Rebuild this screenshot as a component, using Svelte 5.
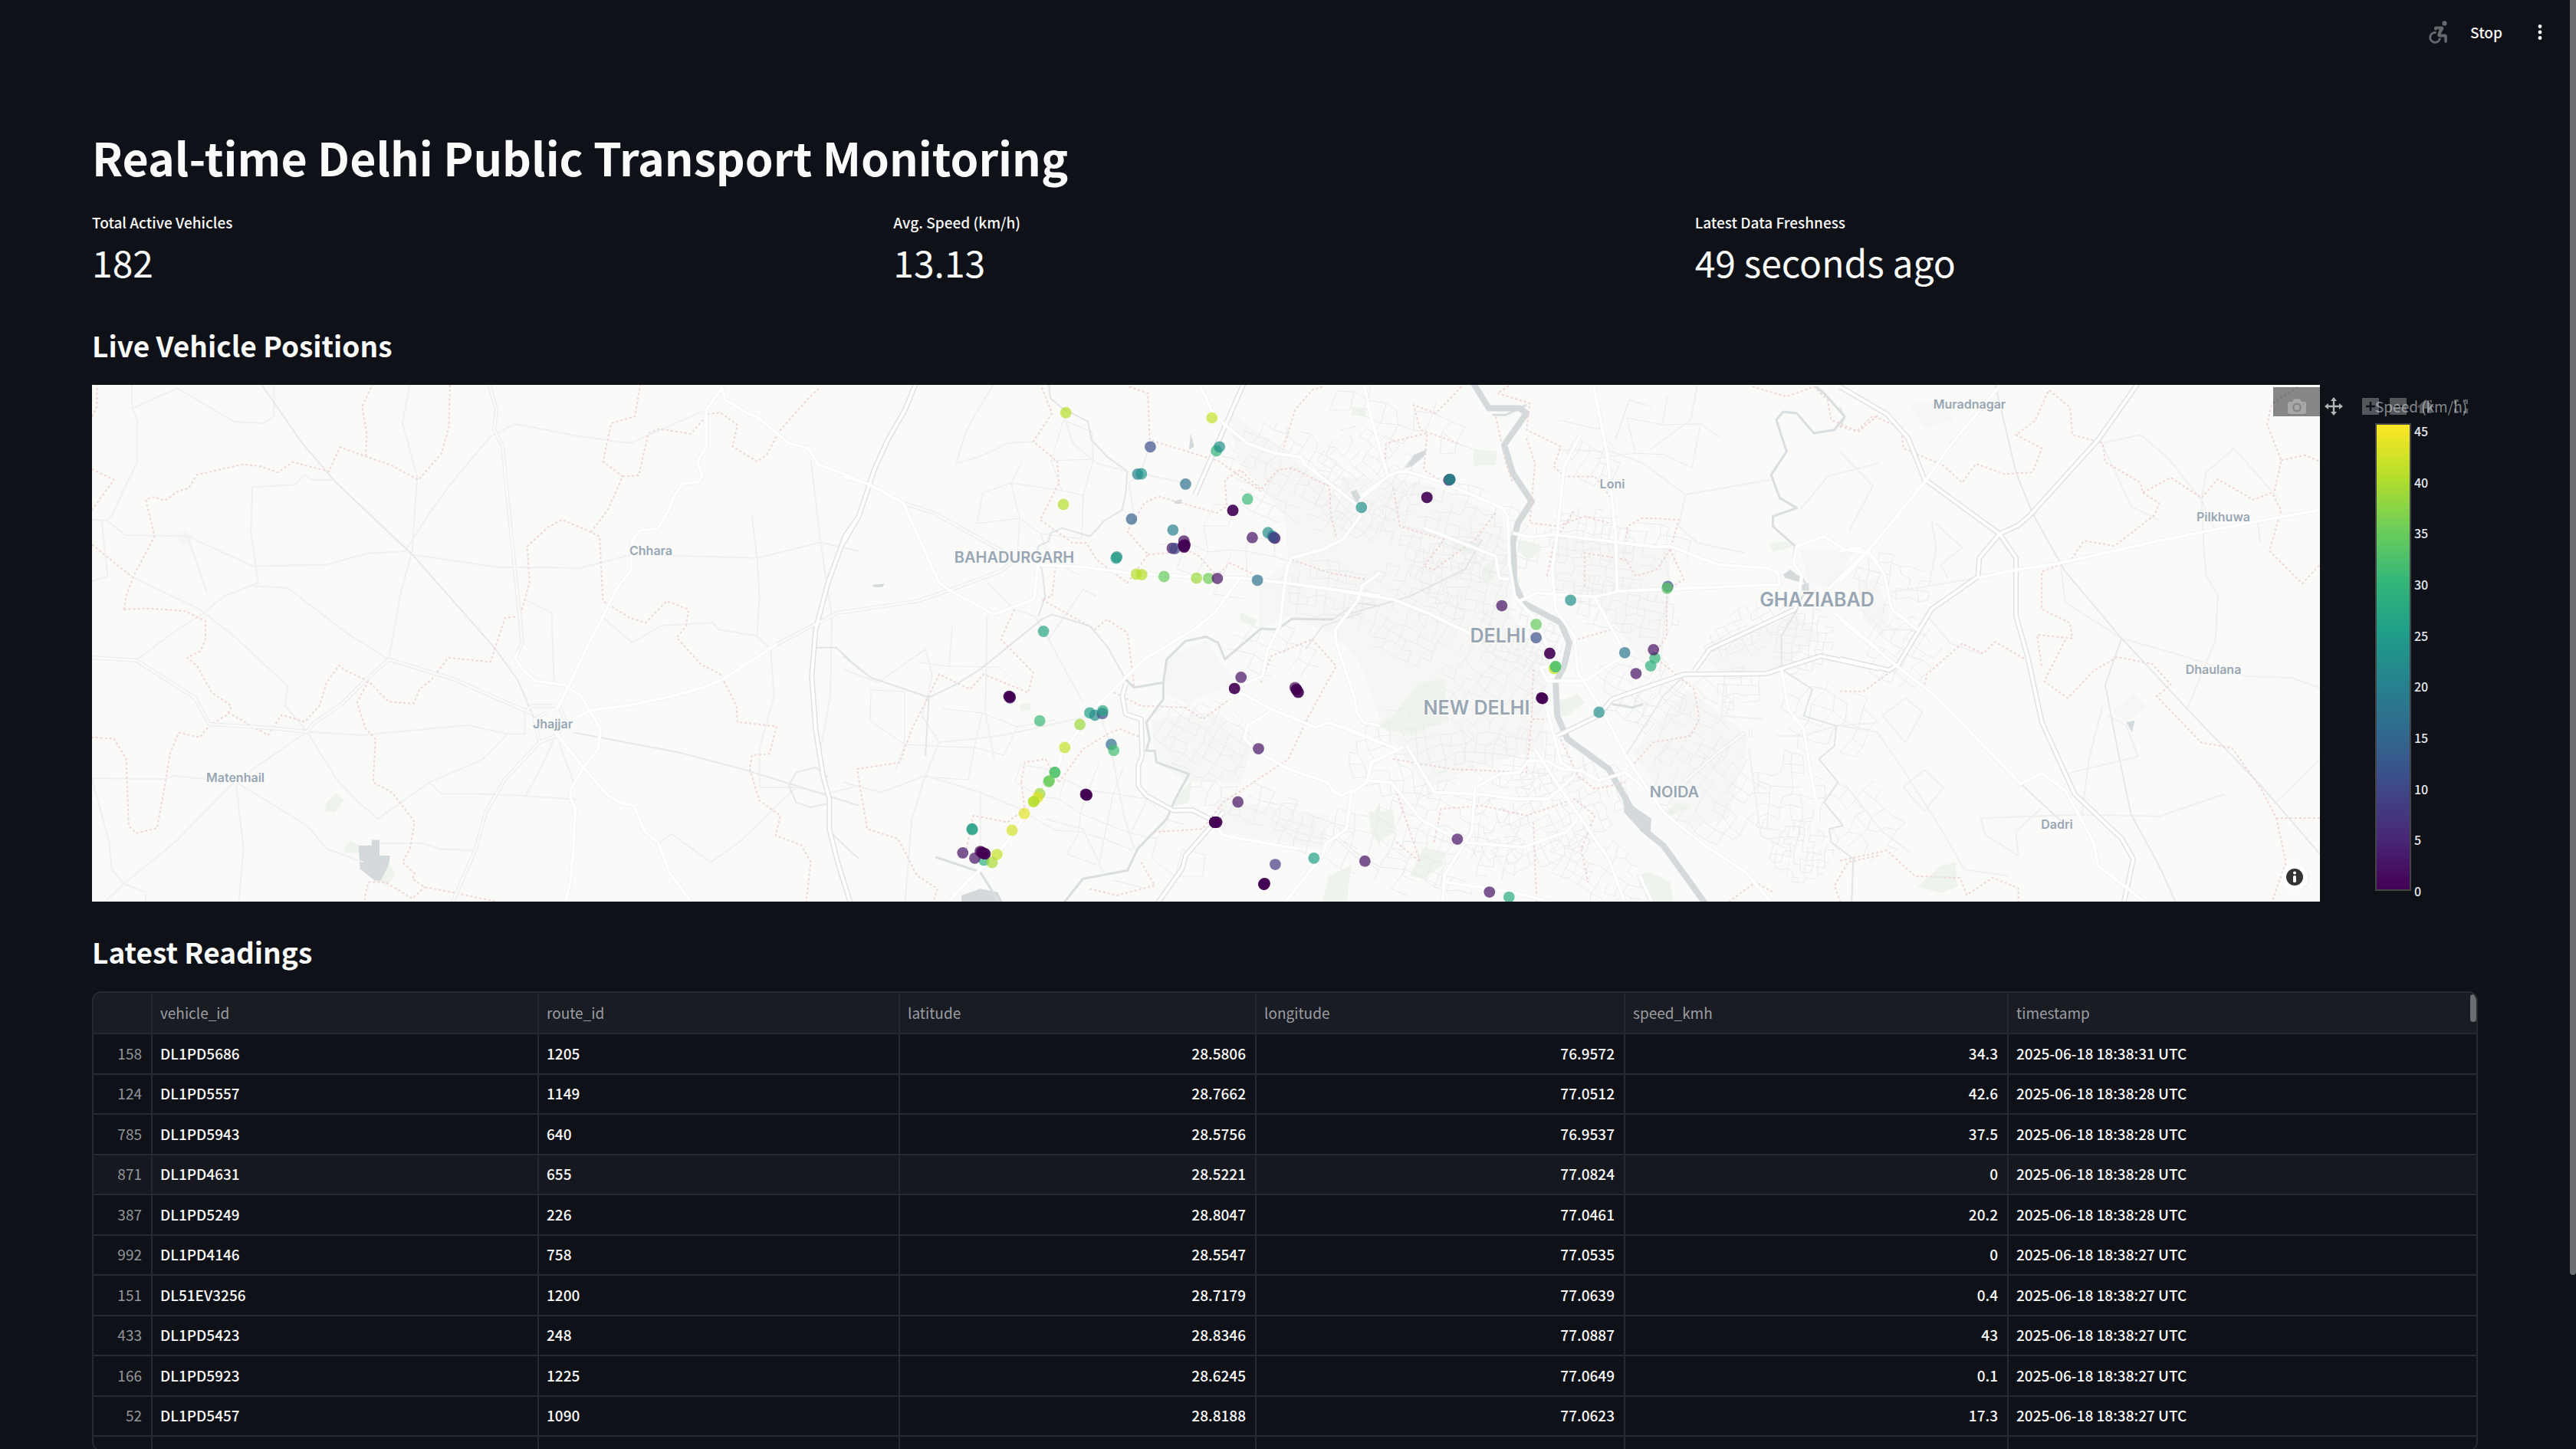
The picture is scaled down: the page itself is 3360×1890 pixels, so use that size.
<script>
  const metrics = [
    { label: 'Total Active Vehicles', value: '182' },
    { label: 'Avg. Speed (km/h)', value: '13.13' },
    { label: 'Latest Data Freshness', value: '49 seconds ago' }
  ];

  const columns = [
    { key: 'index', label: '' },
    { key: 'vehicle', label: 'vehicle_id' },
    { key: 'route', label: 'route_id' },
    { key: 'lat', label: 'latitude' },
    { key: 'lon', label: 'longitude' },
    { key: 'speed', label: 'speed_kmh' },
    { key: 'time', label: 'timestamp' }
  ];

  const readings = [
    ['158', 'DL1PD5686', '1205', '28.5806', '76.9572', '34.3', '2025-06-18 18:38:31 UTC'],
    ['124', 'DL1PD5557', '1149', '28.7662', '77.0512', '42.6', '2025-06-18 18:38:28 UTC'],
    ['785', 'DL1PD5943', '640', '28.5756', '76.9537', '37.5', '2025-06-18 18:38:28 UTC'],
    ['871', 'DL1PD4631', '655', '28.5221', '77.0824', '0', '2025-06-18 18:38:28 UTC'],
    ['387', 'DL1PD5249', '226', '28.8047', '77.0461', '20.2', '2025-06-18 18:38:28 UTC'],
    ['992', 'DL1PD4146', '758', '28.5547', '77.0535', '0', '2025-06-18 18:38:27 UTC'],
    ['151', 'DL51EV3256', '1200', '28.7179', '77.0639', '0.4', '2025-06-18 18:38:27 UTC'],
    ['433', 'DL1PD5423', '248', '28.8346', '77.0887', '43', '2025-06-18 18:38:27 UTC'],
    ['166', 'DL1PD5923', '1225', '28.6245', '77.0649', '0.1', '2025-06-18 18:38:27 UTC'],
    ['52', 'DL1PD5457', '1090', '28.8188', '77.0623', '17.3', '2025-06-18 18:38:27 UTC']
  ];

  const ticks = [45, 40, 35, 30, 25, 20, 15, 10, 5, 0];

  // Map sheets: each has its own grid, placed on the common 2906 x 674 canvas.
  const sheets = {
    west: { x: 0, y: -2, sx: 0.6378, sy: 0.4337 },
    mid: { x: 980, y: -2, sx: 0.4464, sy: 0.4337 },
    east: { x: 1630, y: -2, sx: 0.4464, sy: 0.4337 },
    far: { x: 2280, y: -2, sx: 0.6122, sy: 0.4464 }
  };

  function place(sheet, x, y) {
    const s = sheets[sheet];
    return [Math.round((s.x + x * s.sx) * 10) / 10, Math.round((s.y + y * s.sy) * 10) / 10];
  }

  function trace([sheet, points]) {
    return 'M' + points.split(' ').map((p) => place(sheet, ...p.split(',').map(Number)).join(' ')).join('L');
  }

  const highways = [
    ['west', '1568,400 1540,460 1505,600 1480,740 1472,880 1480,1040 1495,1180 1508,1250 1508,1340 1525,1440 1552,1568'],
    ['mid', '212,0 180,80 130,170 90,260 68,330 45,400 0,480'],
    ['mid', '1170,0 1115,130 1028,335'],
    ['mid', '825,905 815,940 825,995 870,1010 873,1120 862,1150 862,1210 885,1240 965,1285 1020,1283 1070,1310'],
    ['mid', '1110,1290 1000,1420 990,1460 915,1568'],
    ['east', '630,1060 750,1000 790,950 1000,875 1240,873 1400,820 1568,858'],
    ['east', '1030,865 1075,800 1325,680'],
    ['far', '0,10 100,90 145,160 180,280 340,440 375,510 375,680 400,800 430,990 500,1200 600,1330 625,1390 605,1516'],
    ['far', '635,0 550,165 405,385 380,415 340,440 297,510 294,565 195,660 125,820 105,838 0,805']
  ].map(trace);

  const majors = [
    ['west', '1290,10 1256,80 1256,190 1238,235 1248,280 1240,297 1208,302 1190,340 1180,380 1157,438 1120,442 1103,480 1103,560 1072,620 1045,700 1010,800 975,910 950,980'],
    ['west', '1285,0 1295,50 1340,90 1360,100 1425,180 1465,195 1485,245 1520,262 1568,292'],
    ['west', '870,810 865,825 880,860 908,895 968,908 1000,940 1020,990 1040,1040 1035,1100 1005,1155 980,1220 978,1245 988,1280 985,1400 978,1500 967,1568'],
    ['west', '1400,785 1290,890 1250,915 1180,943 1100,968 1018,984 985,1010'],
    ['west', '948,1050 1005,1155 1055,1240 1085,1265 1108,1270 1130,1348 1158,1383 1180,1470 1230,1568'],
    ['mid', '0,280 75,303 175,360 280,600 310,622 440,695 558,648 568,545 700,552 830,570 1070,585 1160,585 1290,600 1568,640'],
    ['mid', '1040,0 1075,80 1115,125 1180,180 1260,210 1337,222 1345,240 1500,365 1510,400 1460,470 1400,500 1310,525 1298,550 1290,600 1275,730 1240,800 1225,880 1160,910'],
    ['mid', '1568,300 1515,345 1505,370'],
    ['mid', '1160,585 1085,690 1025,740 880,830 820,890 740,970 640,1110 618,1180 540,1290 450,1417 360,1500 300,1568'],
    ['mid', '1143,920 1250,980 1380,1035 1420,1020 1568,1080'],
    ['mid', '1285,1568 1400,1420 1410,1385 1470,1340 1485,1230 1530,1200 1545,1140 1568,1130'],
    ['mid', '1250,985 1180,1030 1172,1070 1230,1120 1300,1160 1415,1200 1430,1225 1455,1240 1485,1225'],
    ['mid', '1568,570 1515,610 1505,650 1437,740 1440,780 1495,950 1500,990 1520,1020 1568,1030'],
    ['mid', '1070,1310 1110,1360 1330,1400'],
    ['east', '65,0 85,100 135,280 55,340'],
    ['east', '135,280 160,268 190,265 300,300 470,375 485,400 490,540 505,640 570,715 600,790 615,850'],
    ['east', '500,450 545,462 620,455 920,492 960,490 1100,545 1240,555 1275,570 1280,605 810,625 740,642 620,635 570,630 520,655'],
    ['east', '735,0 775,210 800,450 805,625'],
    ['east', '700,150 650,250 630,450 615,560 625,680 680,760 690,870 760,980 830,1120 940,1290 1060,1390 1180,1470 1260,1568'],
    ['east', '1325,680 1345,580 1320,540 1330,490 1410,460 1470,500 1540,510 1568,540'],
    ['east', '740,645 830,815 710,895 600,895 582,855 615,850'],
    ['east', '0,625 150,650 250,690 380,755'],
    ['east', '240,435 450,520 460,585 490,590'],
    ['east', '0,1030 160,1100'],
    ['east', '190,1090 270,1230 420,1237 500,1250 605,1250 680,1180'],
    ['east', '75,1195 145,1200 230,1310 350,1380 530,1395 655,1350 690,1310'],
    ['east', '75,1195 85,1140 180,1095'],
    ['east', '565,1100 640,1220 780,1430 830,1568'],
    ['east', '390,1215 380,1350 300,1480 295,1568'],
    ['east', '300,1500 500,1530 640,1568'],
    ['east', '395,1215 460,1175 520,1170 545,1135 600,1135 640,1160 700,1165 750,1195 830,1170 880,1215'],
    ['east', '600,980 640,1140 670,1160'],
    ['east', '1285,860 1305,980 1350,1040 1370,1170 1385,1250'],
    ['east', '1568,470 1420,620'],
    ['east', '1440,690 1568,800'],
    ['east', '870,1480 910,1568'],
    ['far', '345,0 230,190 185,280 60,490 0,580'],
    ['far', '0,490 40,480 70,510 95,560 110,660 165,720'],
    ['far', '1022,370 900,400 680,460 470,525 375,545 295,568'],
    ['far', '0,690 120,825 200,910 385,1170 430,1140 480,1190 540,1340 550,1410 650,1516']
  ].map(trace);

  const secondaries = [
    ['west', '812,0 827,80 822,140 840,190 850,350 862,520 874,690 880,780 870,810'],
    ['west', '1568,682 1525,690 1485,720 1400,785'],
    ['west', '0,825 90,833 210,945 240,1025 370,1037 440,1048 455,1020 510,965 565,885 607,830 740,890 840,955 900,993'],
    ['west', '915,1080 845,1190 805,1290 785,1400 735,1568'],
    ['west', '885,988 900,970 955,970 970,1020 950,1060 915,1080 905,1010 930,990'],
    ['mid', '175,360 265,390 470,508 485,545 460,565 310,622 215,655 0,688'],
    ['east', '1000,1200 1100,1110 1180,1050'],
    ['east', '1195,1065 1195,1035'],
    ['mid', '1440,1365 1500,1420 1568,1460']
  ].map(trace);

  const minors = [
    ['west', '82,0 82,75 92,110 92,240 65,320 40,400 20,420 32,580 0,595'],
    ['west', '82,75 175,15 290,115 350,120 372,100 372,0'],
    ['west', '0,410 30,412 68,456 195,460 330,550 480,545 560,512 640,505 690,390 740,290 815,160 865,122 1000,160 1100,180 1256,80'],
    ['west', '497,290 450,290 435,275 415,305 328,312 325,450 340,600 270,640 220,700 175,740 90,833'],
    ['west', '195,460 235,630'],
    ['west', '80,580 220,680 290,760 400,910 395,970 440,1048'],
    ['west', '650,0 635,120 665,280 655,500 630,640 607,830'],
    ['west', '330,610 400,615 520,750 607,830'],
    ['west', '655,515 830,553 1000,555 1103,515 1360,525 1490,478 1568,505'],
    ['west', '1350,400 1360,525 1365,640 1360,760 1280,740 1270,720 1165,728 1105,780 1045,705'],
    ['west', '1360,760 1388,800 1395,940 1365,1100 1365,1215 1440,1215'],
    ['west', '1470,230 1490,480 1513,700 1510,940 1490,1100'],
    ['west', '885,650 940,690 945,900'],
    ['west', '440,1048 290,1200 170,1180 150,1190 0,1188'],
    ['west', '290,1200 170,1380 65,1505 20,1568'],
    ['west', '295,1210 310,1400 300,1568'],
    ['west', '295,1200 440,1330 480,1400 555,1440'],
    ['west', '0,1188 35,1380 40,1460 65,1505 110,1530 110,1568'],
    ['west', '440,1048 500,1190 545,1260 585,1310 690,1200 800,1130 850,1055'],
    ['west', '440,1048 550,1058 770,1028 850,1055 885,1055 885,990'],
    ['west', '690,1200 715,1235 800,1235 880,1240 990,1252'],
    ['west', '590,1383 675,1383 710,1400 780,1405'],
    ['west', '1160,1383 1185,1355 1265,1440 1320,1385 1440,1215'],
    ['west', '1440,1215 1500,1235 1568,1210'],
    ['west', '945,1070 920,1150 885,1245'],
    ['west', '955,1080 985,1200'],
    ['mid', '440,0 360,140 330,240 400,220 480,180 560,175'],
    ['mid', '640,80 670,180 740,240 830,265'],
    ['mid', '890,200 870,270 835,300 850,400'],
    ['mid', '870,272 1000,300'],
    ['mid', '420,600 500,680 560,700 600,770 700,960'],
    ['mid', '0,860 100,900 240,800 260,880 230,1000 280,1080 460,1060 720,1000'],
    ['mid', '740,960 780,1090 820,1300 850,1400'],
    ['mid', '280,1080 240,1180 200,1310 180,1568'],
    ['mid', '0,1200 110,1230 240,1180 400,1230 540,1290'],
    ['mid', '400,1230 400,1400'],
    ['mid', '420,700 415,990 440,1130'],
    ['mid', '600,770 700,620 740,640'],
    ['mid', '590,1310 700,1340 760,1470'],
    ['east', '640,200 790,205 880,240 1005,335 985,430 1040,480 1180,510'],
    ['east', '1005,335 1250,290'],
    ['east', '1040,0 1020,110 900,200'],
    ['east', '905,70 840,50 800,170'],
    ['east', '1568,240 1420,280 1340,380'],
    ['east', '940,500 960,600 940,740 930,880'],
    ['east', '1120,870 1110,1000 1230,1010'],
    ['east', '1445,1030 1568,1020'],
    ['east', '1270,1060 1350,1060 1445,1030'],
    ['east', '1190,1100 1225,1360 1300,1400'],
    ['far', '195,400 205,480 190,590'],
    ['far', '205,410 260,480 215,530 230,570'],
    ['far', '110,610 295,568'],
    ['far', '40,560 45,660 90,720 165,720'],
    ['far', '555,170 580,240 620,360 680,400'],
    ['far', '560,175 640,150 700,220 770,340 800,430'],
    ['far', '770,340 775,480 780,560 805,620 800,750 740,950'],
    ['far', '840,190 780,260 770,340'],
    ['far', '840,190 930,330'],
    ['far', '470,530 480,640 600,745 740,800 860,855 960,860 1022,890'],
    ['far', '485,1140 635,1090 610,1000 570,970'],
    ['far', '560,940 530,1100 515,1260 680,1265 820,1200'],
    ['far', '300,1270 520,1260'],
    ['far', '300,1270 310,1320 380,1380'],
    ['far', '925,1230 1022,1100'],
    ['far', '0,1000 80,1020 135,1130 210,1290 265,1420 360,1440'],
    ['far', '10,1170 90,1310 150,1370'],
    ['far', '90,970 140,920 175,960 140,1050 90,970'],
    ['far', '180,1130 135,1180 180,1250 220,1180 180,1130'],
    ['far', '380,1380 375,1310 430,1240'],
    ['far', '890,400 895,465'],
    ['far', '180,670 235,760 300,790'],
    ['far', '0,200 70,300 20,430']
  ].map(trace);

  const rails = [
    ['west', '345,0 430,180 500,300 655,515 820,790 870,890 905,1010'],
    ['west', '985,1050 1200,1110 1330,1160 1440,1210 1568,1270'],
    ['west', '1425,1210 1440,1170 1480,1155 1505,1185'],
    ['west', '1425,1210 1440,1260 1470,1275 1510,1262'],
    ['west', '1510,1350 1568,1430'],
    ['mid', '1515,690 1400,730 1350,800'],
    ['east', '830,1120 940,940 1000,880'],
    ['far', '330,0 375,260 410,380 480,550 600,745 735,945 900,1180 1022,1375'],
    ['far', '600,745 565,880 590,1060 620,1260 680,1410 715,1516'],
    ['far', '385,1170 480,1290']
  ].map(trace);

  const borders = [
    ['west', '0,258 45,290 20,340 0,380'],
    ['west', '10,0 10,70 0,100'],
    ['west', '0,485 80,580'],
    ['west', '65,680 70,640 85,580 128,460 110,350 125,342 150,352 175,325 198,315 215,275 310,243 345,250 380,268 410,237 485,265 507,192 560,220 610,245 668,290 715,210 730,130 732,0'],
    ['west', '575,0 552,70 562,150 560,220'],
    ['west', '65,680 120,677 190,685 232,715 232,770 222,805 195,825 215,850 245,930 285,970 278,995 240,1030 220,1065 178,1050 160,1110 150,1200 133,1338 90,1353 75,1330 70,1130 45,1068 0,1065'],
    ['west', '278,990 360,1058 388,997 435,1018 465,970 480,900 505,848 520,865 565,895 607,958 658,963 670,920 695,890 728,825 815,838 845,705 875,700 895,600 890,490 935,430 962,410 1020,448 1038,460 1045,655 1100,705 1132,720 1175,655 1220,680 1215,730 1196,765 1245,845 1285,875 1318,970 1320,1018 1400,1032 1385,1115 1350,1118 1345,1160 1365,1255 1408,1300 1398,1360 1450,1388 1470,1440 1460,1568'],
    ['west', '1020,448 1055,380 1085,280 1045,235 1062,120 1110,100 1122,0'],
    ['west', '1085,280 1118,277 1138,150 1160,137 1225,152 1260,92 1285,88 1320,125 1310,190 1360,235 1380,215 1405,145 1465,45 1490,10'],
    ['west', '565,895 542,960 560,1040 580,1070 575,1200 615,1232 660,1320 650,1400 635,1440 660,1475 655,1490 680,1515 735,1530 830,1560'],
    ['west', '555,1568 565,1500 600,1500 655,1550 680,1515'],
    ['mid', '575,0 610,90 555,175 625,235 630,300 575,410 670,480 710,480 740,530 830,600 890,515 830,445 880,360 920,340 1090,390 1120,370 1115,290 1160,260 1220,320 1270,260 1310,255 1420,310 1425,400 1440,460'],
    ['mid', '890,515 1010,505 1040,520 1090,580 1130,540 1200,575'],
    ['mid', '835,10 890,30 895,170 1100,235 1220,325'],
    ['mid', '1400,10 1370,20 1320,80 1285,200'],
    ['mid', '500,680 460,770 555,870 540,930 410,875 370,920 280,875 240,960 200,1040 165,1140 40,1160 70,1340 160,1370 215,1480 275,1520 260,1568'],
    ['mid', '620,550 610,640 580,650 735,740 770,710 830,750 850,910'],
    ['mid', '630,1200 700,1100 780,1050 810,1040 880,1070'],
    ['mid', '520,1200 530,1140 590,1130 630,1200'],
    ['mid', '520,1200 530,1280 480,1320 380,1300 360,1400'],
    ['mid', '790,930 870,970 1000,975 1050,1010 1130,950'],
    ['mid', '1370,770 1440,850 1360,1000 1300,1130 1110,1260 1050,1340 900,1350'],
    ['mid', '1310,530 1420,570 1530,590'],
    ['mid', '720,1520 800,1540 910,1510 870,1440'],
    ['mid', '1220,900 1250,820 1370,770'],
    ['east', '350,10 275,90 210,65 230,140 340,180'],
    ['east', '125,270 130,180 250,150 240,260 300,300'],
    ['east', '450,100 480,240 500,300'],
    ['east', '500,0 455,30 550,60 540,140 640,190 620,250 650,280 740,280 790,350'],
    ['east', '540,165 565,240 550,420 630,430 710,400 780,420'],
    ['east', '830,480 835,430 880,405 985,410 960,500 1000,590 950,620 950,760 910,820 1030,920 1045,1010 1020,1060 910,1080 840,1160'],
    ['east', '710,610 710,510 830,530 860,580 920,560 960,500'],
    ['east', '450,390 390,470 270,560 240,550 300,470 170,430 150,310'],
    ['east', '690,770 790,740'],
    ['east', '600,580 620,480 680,380'],
    ['east', '560,860 555,1010 600,1010'],
    ['east', '150,1130 320,1160 540,1170 555,1010'],
    ['east', '160,1380 230,1440 150,1200'],
    ['east', '270,1380 290,1280 410,1270 540,1300 680,1250 740,1300 700,1400 720,1500'],
    ['east', '640,1070 690,1180 740,1220 830,1200'],
    ['east', '1200,10 1300,40 1380,10 1420,50 1430,110 1510,145 1568,95'],
    ['east', '1120,1568 1210,1500 1260,1530'],
    ['east', '560,1320 570,1568'],
    ['east', '1568,1420 1480,1440 1440,1510 1460,1568'],
    ['far', '0,125 35,140 70,95 130,130 135,190 220,240 260,290 290,235 350,265 410,260 430,190 375,150 415,110 445,20 490,70 495,150 560,175 565,230 640,290 645,320 705,275 770,335 805,280 880,340 920,320 940,370 915,490 985,585 1022,530'],
    ['far', '645,320 680,350 670,385 585,475 520,460 490,520 430,550 430,660 490,700 495,745 420,735 430,830'],
    ['far', '480,750 435,870 485,920 540,840 590,800 665,820 705,880 675,915 770,1050 835,1065 895,1180 930,1270 1022,1270'],
    ['far', '930,1270 950,1400 920,1516'],
    ['far', '975,10 920,60 910,120 940,225 925,320'],
    ['far', '940,225 990,210 1022,228'],
    ['far', '180,880 185,850 260,760 305,790 330,755 400,810'],
    ['far', '0,1395 100,1365 160,1440 255,1445 270,1495 325,1445 380,1475 380,1516'],
    ['far', '0,900 50,900 120,830']
  ].map(trace);

  const rivers = [
    ['east', '385,0 430,75 520,75 540,90 475,185 500,270 555,355 515,420 500,480 505,600 530,660 640,720 665,780 650,850 625,900 630,1000 660,1070 780,1160 830,1250 880,1340 940,1390 1065,1568']
  ].map(trace);

  const streams = [
    ['mid', '935,900 945,830 1000,775 1060,762 1095,780 1115,830 1220,738 1270,740 1310,708 1430,710'],
    ['mid', '820,885 850,915 935,900 935,950 885,1020 895,1070 885,1105 910,1105 915,1140 1010,1175 970,1250 945,1310 860,1400 830,1465 700,1490 640,1568'],
    ['mid', '270,1425 400,1470 460,1568'],
    ['east', '1385,10 1410,30 1470,100 1440,140 1380,150 1330,90 1290,85 1270,110 1300,205 1255,275 1280,345 1330,375 1260,400 1260,430 1325,490 1320,540 1360,610 1325,690'],
    ['east', '790,965 850,975 880,965'],
    ['east', '440,95 480,95 540,65']
  ].map(trace);

  const brooks = [
    ['mid', '1430,710 1500,660 1568,670'],
    ['mid', '600,0 605,45 640,75 715,115 725,170 770,220 830,265 825,330 815,380 760,415 740,440 720,460 640,435 605,450 600,475 570,490 565,510 580,560 590,640 570,700'],
    ['mid', '0,820 80,885 180,920 250,945 330,905 400,860 580,710 610,695 720,730 770,790 820,880'],
    ['mid', '250,945 240,1120'],
    ['east', '1325,690 1285,760 1285,860 1375,920 1350,1000 1445,1030 1440,1090 1395,1130 1450,1200 1410,1260 1465,1330 1425,1340 1430,1380 1495,1430 1490,1568'],
    ['east', '0,700 200,640 360,560 410,470'],
    ['west', '1482,795 1522,795 1568,858'],
    ['far', '0,70 10,100 0,130']
  ].map(trace);

  const lakes = [
    ['west', '545,1390 572,1390 572,1373 588,1373 588,1420 610,1420 605,1455 590,1495 578,1495 548,1460'],
    ['mid', '345,1540 400,1520 450,1530 470,1568 345,1568'],
    ['mid', '1482,325 1500,320 1515,350 1500,365'],
    ['mid', '1015,150 1025,190 1010,200'],
    ['mid', '965,355 990,348 985,362 970,362'],
    ['mid', '85,605 120,603 115,612 90,613'],
    ['east', '185,255 210,215 250,198 240,220 205,250'],
    ['east', '820,1220 850,1270 905,1310 900,1370 860,1330 825,1290'],
    ['east', '1345,605 1365,600 1365,625 1345,625'],
    ['east', '1290,575 1310,560 1350,590 1345,600 1295,585'],
    ['far', '610,990 628,985 622,1020']
  ].map((l) => trace(l) + 'Z');

  const parks = [
    ['west', '480,1260 500,1232 515,1255 497,1290 475,1285'],
    ['west', '515,1395 530,1375 545,1390 545,1412 515,1412'],
    ['west', '585,1495 605,1430 620,1475 605,1510'],
    ['mid', '515,965 550,960 545,985 520,985'],
    ['mid', '1160,690 1210,710 1200,730 1160,715'],
    ['mid', '1400,1560 1420,1480 1485,1450 1470,1568'],
    ['mid', '1545,1300 1568,1260 1568,1390 1540,1350'],
    ['mid', '960,1260 1020,1190 1010,1260 970,1270'],
    ['mid', '1485,70 1530,75 1525,100 1485,95'],
    ['east', '385,197 455,205 450,245 385,248'],
    ['east', '515,470 580,485 570,515 545,530 515,505'],
    ['east', '225,900 300,890 310,1010 200,1060 100,1030 150,1000'],
    ['east', '80,1290 150,1285 155,1350 115,1375 85,1345'],
    ['east', '200,1480 240,1395 300,1410 295,1450 235,1490'],
    ['east', '620,960 690,935 710,960 660,1000 630,1000'],
    ['east', '1250,480 1300,475 1320,490 1260,508'],
    ['east', '860,1480 900,1470 960,1500 970,1568 900,1568'],
    ['east', '940,1290 990,1260 1020,1275 960,1300'],
    ['east', '320,470 400,480 380,510 330,500'],
    ['east', '410,560 440,530 445,590 415,600'],
    ['far', '165,1470 215,1410 245,1400 250,1470 215,1490']
  ].map((p) => trace(p) + 'Z');

  const built = [
    ['mid', '1130,90 1290,200 1440,340 1568,500 1568,900 1440,760 1300,700 1215,740 1215,600 1300,540 1290,400 1150,230'],
    ['mid', '940,830 1060,770 1110,850 1150,900 1000,960 940,930'],
    ['mid', '900,1010 1080,990 1200,1080 1160,1200 1000,1200 910,1130'],
    ['mid', '1090,1250 1420,1300 1400,1400 1110,1350'],
    ['east', '0,280 250,300 470,400 490,590 500,700 600,860 590,1100 400,1150 250,1220 120,1030 0,700'],
    ['east', '620,460 960,500 950,760 880,840 740,640 620,630'],
    ['east', '1060,830 1330,690 1400,760 1280,860 1110,870'],
    ['east', '850,1110 1010,920 1190,1060 1130,1310 1010,1340'],
    ['east', '1340,500 1500,500 1430,620 1360,590'],
    ['west', '175,450 190,440 208,460 200,490 178,480'],
    ['far', '45,580 80,570 105,680 90,740 50,690'],
    ['far', '580,960 625,905 655,945 610,990'],
    ['far', '150,60 230,50 240,110 180,130']
  ].map((p) => trace(p) + 'Z');

  // Street patches: centre, half-size, grid step, rotation in degrees.
  const districts = [
    [1560, 120, 90, 60, 15, 28], [1660, 130, 70, 70, 12, 40], [1780, 190, 110, 60, 14, 15],
    [1610, 270, 60, 40, 12, 5], [1720, 300, 80, 60, 13, 25], [1450, 460, 70, 50, 14, 32],
    [1540, 560, 120, 30, 16, 20], [1720, 480, 80, 60, 15, -12], [1830, 400, 70, 70, 15, 35],
    [1860, 330, 60, 40, 9, 20], [1790, 250, 70, 50, 13, 10], [1950, 220, 60, 60, 11, 5],
    [2000, 290, 70, 40, 12, 12], [1770, 590, 100, 70, 15, 18], [1900, 560, 110, 60, 12, -25],
    [1870, 490, 80, 40, 13, 8], [1960, 630, 70, 40, 12, 30], [2020, 400, 60, 50, 15, 28],
    [2080, 440, 70, 60, 17, 35], [2110, 530, 80, 60, 16, 35], [2160, 320, 60, 30, 12, -27],
    [2150, 400, 30, 30, 11, 0], [2230, 330, 40, 50, 10, 8], [2210, 540, 50, 60, 14, 4],
    [2230, 610, 40, 40, 8, 8], [2270, 440, 70, 50, 20, 25], [2350, 260, 50, 40, 14, 10],
    [2360, 350, 50, 50, 15, 35], [2310, 570, 60, 50, 17, 40], [1540, 350, 60, 40, 18, 20],
    [1690, 40, 120, 36, 22, 15], [1480, 220, 90, 60, 30, 10], [1330, 570, 140, 70, 34, 20],
    [1250, 160, 90, 110, 46, 8], [1130, 430, 120, 110, 50, 12], [2010, 60, 130, 50, 42, 6],
    [1650, 610, 120, 50, 26, 22], [2030, 210, 60, 30, 14, 10], [1960, 100, 40, 30, 14, 30]
  ];

  function makeStreets() {
    let seed = 7321;
    const random = () => ((seed = (seed * 16807) % 2147483647) / 2147483647);
    return districts.map(([cx, cy, hw, hh, step, angle]) => {
      const a = (angle * Math.PI) / 180;
      const cols = Math.ceil((2 * hw) / step);
      const rows = Math.ceil((2 * hh) / step);
      const node = [];
      for (let r = 0; r <= rows; r++) {
        node.push([]);
        for (let c = 0; c <= cols; c++) {
          const x = -hw + c * step + (random() - 0.5) * step * 0.5;
          const y = -hh + r * step + (random() - 0.5) * step * 0.5;
          const inside = (x / hw) ** 2 + (y / hh) ** 2 < 1.15;
          const px = Math.round(cx + x * Math.cos(a) - y * Math.sin(a));
          const py = Math.round(cy + x * Math.sin(a) + y * Math.cos(a));
          node[r].push(inside ? `${px} ${py}` : null);
        }
      }
      let d = '';
      for (let r = 0; r <= rows; r++) {
        for (let c = 0; c <= cols; c++) {
          const here = node[r][c];
          const right = node[r][c + 1];
          const below = node[r + 1]?.[c];
          if (here && right && random() < 0.72) d += `M${here}L${right}`;
          if (here && below && random() < 0.72) d += `M${here}L${below}`;
        }
      }
      return d;
    });
  }
  const streets = makeStreets();

  const towns = [
    ['Chhara', 729, 216, 'town'], ['Jhajjar', 601, 442, 'town'], ['Matenhail', 187, 512, 'town'],
    ['Loni', 1983, 129, 'town'], ['Muradnagar', 2449, 25, 'town'], ['Pilkhuwa', 2780, 172, 'town'],
    ['Dhaulana', 2767, 371, 'town'], ['Dadri', 2563, 573, 'town'],
    ['BAHADURGARH', 1203, 225, 'city'], ['NOIDA', 2064, 531, 'city'],
    ['DELHI', 1834, 327, 'metro'], ['NEW DELHI', 1806, 421, 'metro'], ['GHAZIABAD', 2250, 280, 'metro']
  ];

  // Vehicle fixes: x, y, speed and how many vehicles share the spot.
  const fixes = {
    mid: [
      [650, 88, 41], [1077, 104, 42], [897, 191, 11], [1090, 203, 30], [1099, 191, 23], [860, 273, 20],
      [871, 272, 24], [1000, 303, 17], [643, 364, 41], [842, 408, 14], [963, 441, 20], [1181, 348, 31],
      [1138, 382, 0, 2], [1514, 373, 23], [1195, 464, 2], [1241, 449, 22], [1261, 466, 2], [1254, 460, 20],
      [1258, 464, 8], [961, 496, 2], [969, 497, 10], [995, 474, 1], [998, 486, 0, 2], [996, 492, 0, 2],
      [994, 488, 0, 2], [799, 522, 22], [797, 526, 26], [856, 574, 41], [872, 575, 41], [937, 581, 35],
      [1032, 586, 39], [1067, 587, 36], [1093, 587, 2], [1210, 592, 17], [585, 746, 27], [487, 946, 4],
      [484, 942, 0, 2], [487, 943, 0, 2], [574, 1015, 31], [720, 991, 26], [735, 998, 22], [757, 993, 10],
      [758, 985, 27], [691, 1026, 39], [647, 1095, 42], [783, 1086, 17], [790, 1104, 32], [618, 1170, 33, 2],
      [600, 1198, 36], [602, 1195, 35], [574, 1234, 39], [568, 1245, 44], [556, 1258, 41, 2], [529, 1294, 44],
      [493, 1344, 43], [708, 1236, 0, 2], [711, 1238, 0, 3], [376, 1340, 22], [377, 1342, 27], [349, 1412, 2],
      [400, 1408, 1], [411, 1434, 29], [384, 1428, 2], [404, 1410, 0], [408, 1413, 0, 3], [414, 1415, 0, 2],
      [449, 1417, 42], [435, 1441, 40], [1162, 884, 2], [1143, 918, 0, 2], [1320, 915, 1], [1324, 921, 0, 3],
      [1329, 929, 0, 2], [1213, 1099, 2], [1153, 1259, 2], [1085, 1320, 0, 3], [1091, 1320, 0, 2],
      [1375, 1428, 26], [1262, 1447, 8], [1524, 1437, 2], [1229, 1507, 0, 3], [1231, 1504, 0, 2]
    ],
    east: [
      [313, 291, 3], [316, 289, 22, 1], [316, 289, 4], [316, 289, 24], [249, 343, 0, 2], [468, 669, 2],
      [669, 652, 23], [568, 725, 35], [568, 765, 11], [608, 812, 0, 2], [621, 858, 42], [625, 852, 33, 2],
      [584, 946, 0, 2], [587, 948, 0, 2], [752, 989, 23], [827, 810, 18], [915, 826, 30], [911, 801, 2],
      [903, 850, 29], [860, 873, 2], [953, 611, 12], [951, 616, 34], [338, 1371, 2], [432, 1530, 2],
      [489, 1545, 28]
    ]
  };

  const viridis = ['440154', '482878', '3e4989', '31688e', '26828e', '1f9e89', '35b779', '6ece58', 'b5de2b', 'fde725'];

  function speedColor(speed) {
    const t = (speed / 46) * (viridis.length - 1);
    const i = Math.min(Math.floor(t), viridis.length - 2);
    const mix = [0, 2, 4].map((k) => {
      const from = parseInt(viridis[i].slice(k, k + 2), 16);
      const to = parseInt(viridis[i + 1].slice(k, k + 2), 16);
      return Math.round(from + (to - from) * (t - i));
    });
    return `rgb(${mix.join(',')})`;
  }

  const dots = Object.entries(fixes).flatMap(([sheet, list]) =>
    list.flatMap(([x, y, speed, count = 1]) => {
      const [cx, cy] = place(sheet, x, y);
      return Array.from({ length: count }, () => ({ cx, cy, fill: speedColor(speed) }));
    })
  );
</script>

<div class="app">
  <header class="toolbar">
    <svg class="running" viewBox="0 0 24 31" aria-label="Running" role="img">
      <circle cx="20.5" cy="3.4" r="3.1" />
      <path d="M7 11V9.5Q7 7.500 9 7.500H17.500Q20.500 8.500 18.800 11.500L15.500 17.500H21Q23.800 17.500 23.800 20V27.500Q22 30.500 20.300 27.500V21.500H14Q10.500 20.500 11.500 17.500L13.700 11.200H10.500L9.500 12.500Q7.500 13 7 11Z" />
      <path class="wheel" d="M8.500 15.500A6.400 6.400 0 1 0 14.200 24" />
    </svg>
    <button class="stop" type="button">Stop</button>
    <button class="menu" type="button" aria-label="Main menu">
      <svg viewBox="0 0 6 22">
        <circle cx="3" cy="3.500" r="2.400" />
        <circle cx="3" cy="11" r="2.400" />
        <circle cx="3" cy="18.500" r="2.400" />
      </svg>
    </button>
  </header>

  <main>
    <h1>Real-time Delhi Public Transport Monitoring</h1>

    <section class="metrics">
      {#each metrics as metric}
        <div class="metric">
          <div class="label">{metric.label}</div>
          <div class="value">{metric.value}</div>
        </div>
      {/each}
    </section>

    <h2>Live Vehicle Positions</h2>
    <section class="chart">
      <svg class="map" viewBox="0 0 2906 674" role="img" aria-label="Map of vehicle positions around Delhi">
        <rect class="land" width="2906" height="674" />
        {#each built as d}<path class="built" {d} />{/each}
        {#each parks as d}<path class="park" {d} />{/each}
        {#each lakes as d}<path class="lake" {d} />{/each}
        {#each streets as d}<path class="street" {d} />{/each}
        {#each minors as d}<path class="minor" {d} />{/each}
        {#each brooks as d}<path class="brook" {d} />{/each}
        {#each streams as d}<path class="stream" {d} />{/each}
        {#each rivers as d}<path class="river" {d} />{/each}
        {#each rails as d}<path class="rail" {d} />{/each}
        {#each borders as d}<path class="border" {d} />{/each}
        {#each secondaries as d}<path class="secondary-case" {d} />{/each}
        {#each majors as d}<path class="major-case" {d} />{/each}
        {#each highways as d}<path class="highway-case" {d} />{/each}
        {#each secondaries as d}<path class="secondary" {d} />{/each}
        {#each majors as d}<path class="major" {d} />{/each}
        {#each highways as d}<path class="highway" {d} />{/each}
        {#each towns as [name, x, y, size]}
          <text class={size} {x} {y}>{name}</text>
        {/each}
        {#each dots as dot}
          <circle class="dot" cx={dot.cx} cy={dot.cy} r="7.4" fill={dot.fill} />
        {/each}
        <rect class="attribution" x="2863" y="633" width="28" height="21" rx="5" />
        <circle class="halo" cx="2873" cy="642" r="17" />
        <circle class="info" cx="2873" cy="642" r="11" />
        <circle class="info-mark" cx="2873" cy="636.500" r="2" />
        <rect class="info-mark" x="2871" y="640" width="4" height="9" rx="1.500" />
      </svg>

      <div class="legend">
        <div class="legend-title">Speed (km/h)</div>
        <div class="scale">
          <div class="bar"></div>
          <div class="ticks">
            {#each ticks as tick}<span>{tick}</span>{/each}
          </div>
        </div>
      </div>

      <div class="modebar">
        <button type="button" aria-label="Download plot as a PNG" class="camera">
          <svg viewBox="0 0 24 20"><path fill-rule="evenodd" d="M2.500 4H6L8 0.500H16L18 4H21.500Q24 4 24 6.500V17.500Q24 20 21.500 20H2.500Q0 20 0 17.500V6.500Q0 4 2.500 4ZM12 5.500A6 6 0 1 0 12 17.500A6 6 0 1 0 12 5.500ZM12 8A3.500 3.500 0 1 1 12 15A3.500 3.500 0 1 1 12 8ZM20 6.200V7.700H21.500V6.200Z" /></svg>
        </button>
        <button type="button" aria-label="Pan" class="pan">
          <svg viewBox="0 0 24 24"><path d="M12 0L16 5H13.200V10.800H19V8L24 12L19 16V13.200H13.200V19H16L12 24L8 19H10.800V13.200H5V16L0 12L5 8V10.800H10.800V5H8Z" /></svg>
        </button>
        <button type="button" aria-label="Zoom in">
          <svg viewBox="0 0 22 22"><path fill-rule="evenodd" d="M0 0H22V22H0ZM9.800 5V9.800H5V12.200H9.800V17H12.200V12.200H17V9.800H12.200V5Z" /></svg>
        </button>
        <button type="button" aria-label="Zoom out">
          <svg viewBox="0 0 22 22"><path fill-rule="evenodd" d="M0 0H22V22H0ZM5 9.800V12.200H17V9.800Z" /></svg>
        </button>
        <button type="button" aria-label="Reset view">
          <svg viewBox="0 0 22 22"><path d="M11 2L22 11.500L20.800 13L19 11.500V20H13V14H9V20H3V11.500L1.200 13L0 11.500ZM16 3H19V7L16 4.500Z" /></svg>
        </button>
        <button type="button" aria-label="Fullscreen" class="expand">
          <svg viewBox="0 0 22 22"><path d="M2 2H8V5H5V8H2ZM14 2H20V8H17V5H14ZM2 14H5V17H8V20H2ZM17 14H20V20H14V17H17Z" /></svg>
        </button>
      </div>
    </section>

    <h2 class="readings-title">Latest Readings</h2>
    <section class="grid">
      <table>
        <colgroup>
          {#each columns as column}<col class={column.key} />{/each}
        </colgroup>
        <thead>
          <tr>
            {#each columns as column}<th scope="col">{column.label}</th>{/each}
          </tr>
        </thead>
        <tbody>
          {#each readings as row, i}
            <tr class:hovered={i === 3}>
              {#each row as cell, c}
                <td class:index={c === 0} class:number={c > 2 && c < 6}>{cell}</td>
              {/each}
            </tr>
          {/each}
          <tr>
            {#each columns as column}<td></td>{/each}
          </tr>
        </tbody>
      </table>
      <div class="grid-thumb"></div>
    </section>
  </main>
  <div class="page-thumb"></div>
</div>

<style>
  :global(body) {
    background: #0e1117;
  }
  .app {
    position: relative;
    height: 100vh;
    overflow: hidden;
    background: #0e1117;
    color: #fafafa;
    font-family: 'Noto Sans CJK SC', 'Noto Sans', sans-serif;
  }
  button {
    padding: 0;
    border: 0;
    background: none;
    color: inherit;
    font: inherit;
  }
  svg {
    display: block;
  }
  .toolbar {
    display: flex;
    align-items: center;
    justify-content: flex-end;
    height: 84px;
    padding-right: 44px;
  }
  .running {
    width: 24px;
    height: 31px;
    margin-right: 30px;
    fill: #66686d;
  }
  .running .wheel {
    fill: none;
    stroke: #66686d;
    stroke-width: 3;
    stroke-linecap: round;
  }
  .stop {
    margin-right: 46px;
    font-size: 19px;
    font-weight: 500;
    line-height: 32px;
  }
  .menu svg {
    width: 6px;
    height: 22px;
    fill: #fafafa;
  }
  main {
    padding: 81px 128px 0 120px;
  }
  h1 {
    margin: 0 0 29px;
    font-size: 59px;
    font-weight: 700;
    line-height: 80px;
  }
  h2 {
    margin: 49px 0 27px;
    font-size: 37px;
    font-weight: 700;
    line-height: 50px;
  }
  .readings-title {
    margin-top: 40px;
  }
  .metrics {
    display: grid;
    grid-template-columns: repeat(3, 1fr);
    gap: 24px;
  }
  .label {
    font-size: 19px;
    font-weight: 500;
    line-height: 32px;
  }
  .value {
    font-size: 48px;
    line-height: 70px;
  }
  .chart {
    position: relative;
    display: grid;
    grid-template-columns: minmax(0, 1fr) 206px;
  }
  .map {
    width: 100%;
    height: auto;
  }
  .map path {
    fill: none;
    stroke-linejoin: round;
  }
  .land {
    fill: #fafaf8;
  }
  .map .built {
    fill: #f6f6f4;
  }
  .map .park {
    fill: #eef3ed;
  }
  .map .lake {
    fill: #d4dadc;
  }
  .street {
    stroke: #eaebec;
    stroke-width: 1;
  }
  .minor {
    stroke: #f0f0f0;
    stroke-width: 2;
  }
  .rail {
    stroke: #e7e8e9;
    stroke-width: 2;
  }
  .brook {
    stroke: #e0e5e7;
    stroke-width: 2;
  }
  .stream {
    stroke: #d9dfe1;
    stroke-width: 3;
  }
  .river {
    stroke: #d4dadc;
    stroke-width: 8;
  }
  .border {
    stroke: #eed5d7;
    stroke-width: 2;
    stroke-dasharray: 3 3;
  }
  .secondary-case,
  .major-case {
    stroke: #e9eaec;
    stroke-width: 5;
  }
  .highway-case {
    stroke: #dfe1e4;
    stroke-width: 7;
  }
  .secondary {
    stroke: #fafaf9;
    stroke-width: 3;
  }
  .major {
    stroke: #ffffff;
    stroke-width: 4;
  }
  .highway {
    stroke: #ffffff;
    stroke-width: 4;
  }
  text {
    fill: #98a6b4;
    stroke: #fafaf8;
    stroke-width: 3px;
    paint-order: stroke;
    font-family: Inter, 'Open Sans', sans-serif;
    font-weight: 600;
    text-anchor: middle;
    dominant-baseline: central;
  }
  .town {
    font-size: 16px;
  }
  .city {
    font-size: 20px;
  }
  .metro {
    font-size: 25px;
  }
  .dot {
    opacity: 0.7;
  }
  .attribution {
    fill: #ffffff;
    stroke: #e6e6e6;
  }
  .halo {
    fill: #ffffff;
  }
  .info {
    fill: #333333;
  }
  .info-mark {
    fill: #ffffff;
  }
  .legend {
    display: flex;
    flex-direction: column;
    padding: 12px 0 2px 72px;
  }
  .legend-title {
    color: #f0f2f6;
    font-size: 19px;
    line-height: 32px;
    white-space: nowrap;
  }
  .scale {
    display: flex;
    flex: 1;
    gap: 4px;
    padding-top: 4px;
  }
  .bar {
    width: 43px;
    margin: 2px 0 12px;
    border: 2px solid #444;
    background: linear-gradient(to top, #440154, #482878, #3e4989, #31688e, #26828e, #1f9e89, #35b779, #6ece58, #b5de2b, #fde725);
  }
  .ticks {
    display: flex;
    flex-direction: column;
    justify-content: space-between;
    color: #e6eaf1;
    font-size: 16px;
    font-weight: 500;
    line-height: 24px;
  }
  .modebar {
    position: absolute;
    top: 3px;
    right: 0;
    display: flex;
    align-items: center;
    gap: 14px;
    box-sizing: border-box;
    height: 38px;
    padding: 12px 11px 0 19px;
    background: rgba(14, 17, 23, 0.5);
  }
  .modebar svg {
    width: 22px;
    height: 22px;
    fill: rgba(250, 250, 250, 0.3);
  }
  .modebar .camera svg,
  .modebar .pan svg {
    width: 24px;
    height: 24px;
  }
  .modebar .pan svg {
    fill: rgba(250, 250, 250, 0.7);
  }
  .modebar .camera {
    margin-right: 10px;
  }
  .modebar .pan {
    margin-right: 11px;
  }
  .modebar .expand {
    margin-left: 10px;
  }
  .grid {
    position: relative;
    box-sizing: border-box;
    height: 600px;
    overflow: hidden;
    border: 2px solid #262930;
    border-radius: 12px;
  }
  table {
    width: 100%;
    table-layout: fixed;
    border-collapse: separate;
    border-spacing: 0;
    font-size: 19px;
    line-height: 28px;
  }
  col.index {
    width: 77px;
  }
  col.vehicle {
    width: 504px;
  }
  col.route {
    width: 471px;
  }
  col.lat {
    width: 465px;
  }
  col.lon {
    width: 481px;
  }
  col.speed {
    width: 500px;
  }
  col.time {
    width: 610px;
  }
  th,
  td {
    box-sizing: border-box;
    height: 52px;
    padding: 0 12px 2px 10px;
    border-right: 2px solid #262930;
    border-bottom: 2px solid #262930;
    text-align: left;
    font-weight: 500;
  }
  th {
    height: 54px;
    padding-bottom: 0;
    background: #1a1c24;
    color: #9c9da1;
    font-weight: 400;
  }
  tr:nth-child(odd) td {
    height: 53px;
  }
  th:last-child,
  td:last-child {
    border-right: 0;
  }
  td.index {
    color: #94969a;
    font-weight: 400;
    text-align: right;
  }
  td.number {
    text-align: right;
  }
  .hovered td {
    background: #15181f;
  }
  .grid-thumb {
    position: absolute;
    top: 2px;
    right: 0;
    width: 8px;
    height: 36px;
    border-radius: 4px;
    background: #6b6d71;
  }
  .page-thumb {
    position: absolute;
    top: 0;
    right: 0;
    width: 8px;
    height: 88%;
    border-radius: 0 0 4px 4px;
    background: #6b6d71;
  }
</style>
